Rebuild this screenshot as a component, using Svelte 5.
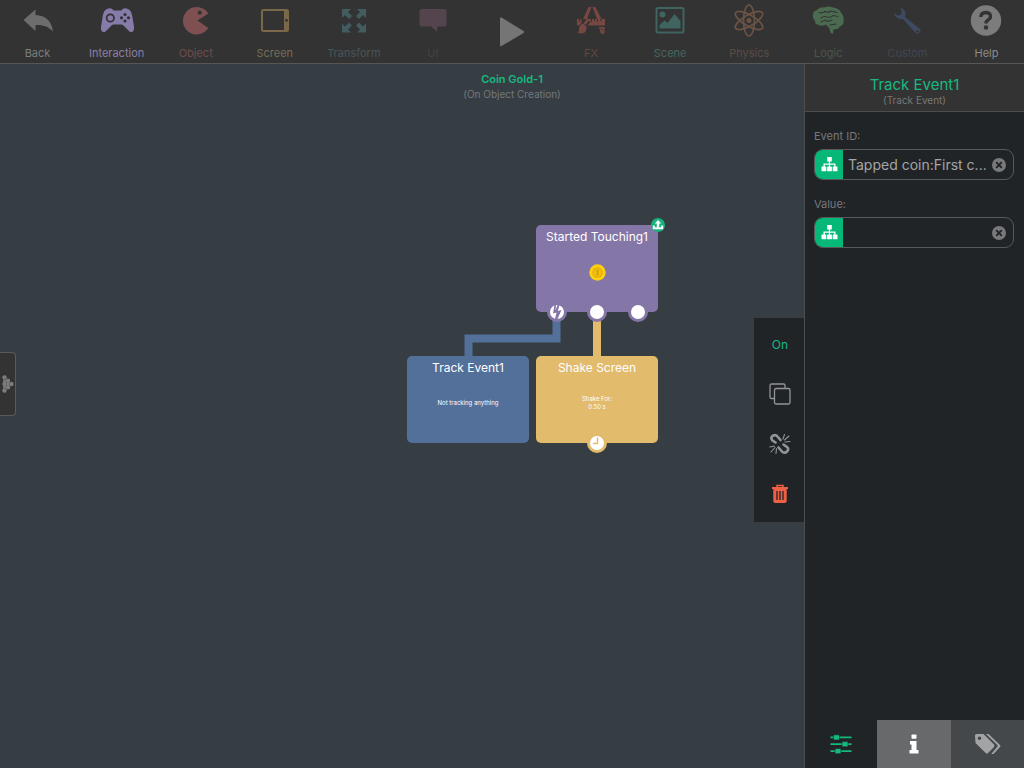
<script lang="ts">
  interface Category {
    id: string;
    label: string;
    color: string;
    text: string;
  }

  interface BehaviorNode {
    id: string;
    kind: string;
    title: string;
    detail: string[];
    x: number;
    y: number;
    ports: { x: number; icon?: string }[];
  }

  const categories: Category[] = [
    { id: 'back', label: 'Back', color: '#6d6d6d', text: '#7d7d7d' },
    { id: 'interaction', label: 'Interaction', color: '#877ba9', text: '#8981a5' },
    { id: 'object', label: 'Object', color: '#7f5052', text: '#6e4d4d' },
    { id: 'screen', label: 'Screen', color: '#7a6849', text: '#776c56' },
    { id: 'transform', label: 'Transform', color: '#425c60', text: '#48565a' },
    { id: 'ui', label: 'UI', color: '#53444d', text: '#484245' },
    { id: 'play', label: '', color: '#757575', text: '#757575' },
    { id: 'fx', label: 'FX', color: '#774841', text: '#67463f' },
    { id: 'scene', label: 'Scene', color: '#40645f', text: '#466660' },
    { id: 'physics', label: 'Physics', color: '#6b5345', text: '#5a4d46' },
    { id: 'logic', label: 'Logic', color: '#4b6b50', text: '#4a564c' },
    { id: 'custom', label: 'Custom', color: '#3d4a61', text: '#414651' },
    { id: 'help', label: 'Help', color: '#7c7c7c', text: '#8b8b8b' },
  ];

  // x is measured from the middle of the canvas, y from its top
  const nodes: BehaviorNode[] = [
    { id: 'touch', kind: 'purple', title: 'Started Touching1', detail: [], x: 24, y: 161, ports: [{ x: 21, icon: 'bolt' }, { x: 61 }, { x: 102 }] },
    { id: 'track', kind: 'blue', title: 'Track Event1', detail: ['Not tracking anything'], x: -105, y: 292, ports: [] },
    { id: 'shake', kind: 'yellow', title: 'Shake Screen', detail: ['Shake For:', '0.50 s'], x: 24, y: 292, ports: [{ x: 61, icon: 'clock' }] },
  ];

  let activeCategory = $state('interaction');
  let activeTab = $state('settings');
  let enabled = $state(true);
  let eventId = $state('Tapped coin:First c...');
  let value = $state('');
</script>

{#snippet categoryIcon(id: string)}
  <svg class="category-icon" viewBox="0 0 36 42" fill="currentColor" aria-hidden="true">
    {#if id === 'back'}
      <path d="M3.500 20 15.500 9.500V15C26 15.500 31.500 21 33 31.500 28.500 26.500 23 24.500 15.500 25V31Z" />
    {:else if id === 'interaction'}
      <path d="M8 9C11 7.500 13 8 14.500 10.500H22.500C24 8 26 7.500 29 9 31.500 10 32.500 12 33.500 17.500L35 27C35.500 31.500 33 33 30.500 31.500L24.500 25.500C23.500 24.800 23 24.500 22 24.500H15C14 24.500 13.500 24.800 12.500 25.500L6.500 31.500C4 33 1.500 31.500 2 27L3.500 17.500C4.500 12 5.500 10 8 9Z" />
      <circle cx="11.300" cy="18" r="3.700" fill="none" stroke="#333" stroke-width="1.700" />
      <g fill="#333">
        <circle cx="26" cy="14.500" r="1.600" /><circle cx="26" cy="21" r="1.600" />
        <circle cx="22.500" cy="17.800" r="1.600" /><circle cx="29.500" cy="17.800" r="1.600" />
      </g>
    {:else if id === 'object'}
      <path fill-rule="evenodd" d="M30.300 13.500 19.500 20.500 30.300 28A13.700 13.700 0 1 1 30.300 13.500ZM21.700 10.600A2.100 2.100 0 1 0 21.700 14.800 2.100 2.100 0 1 0 21.700 10.600Z" />
    {:else if id === 'screen'}
      <path fill-rule="evenodd" d="M6.500 9H29.500Q32 9 32 11.500V29.500Q32 32 29.500 32H6.500Q4 32 4 29.500V11.500Q4 9 6.500 9ZM6 11V30H27V11ZM29.500 19A1.400 1.400 0 1 0 29.500 21.800 1.400 1.400 0 1 0 29.500 19Z" />
    {:else if id === 'transform'}
      <path d="M6 9H15L12 12 16 16 13 19 9 15 6 18ZM30 9H21L24 12 20 16 23 19 27 15 30 18ZM6 32.500H15L12 29.500 16 25.500 13 22.500 9 26.500 6 23.500ZM30 32.500H21L24 29.500 20 25.500 23 22.500 27 26.500 30 23.500Z" />
    {:else if id === 'ui'}
      <path d="M7 9H29Q31.500 9 31.500 11.500V24Q31.500 26.500 29 26.500H22.500L22 31.500 16 26.500H7Q4.500 26.500 4.500 24V11.500Q4.500 9 7 9Z" />
    {:else if id === 'play'}
      <path d="M7.500 17.500Q6 17 6 18.500V45Q6 46.500 7.500 46L29.500 33Q30.500 32 29.500 31Z" />
    {:else if id === 'fx'}
      <path d="M15.500 7H18.500L14 19H10ZM19.500 7H22.500L28.500 19H24ZM4 19H8.500V23L6 25.500H4ZM15.500 19H32V25.500H14.500L17 22.500ZM26 27H31.500V33L29.500 34.500 27.500 32.500Z" />
      <path d="M14.500 18 16.500 20 12.500 25 10.500 23.500ZM10 23.500 13.500 26.500Q14 33 8.500 33.500L4.500 33Q6.500 31.500 6 28 7 24 10 23.500Z" />
      <path d="M18.500 19v3M21.500 19v2M24.500 19v3M27.500 19v2M6.500 19v2.500M28 28l2 2.500" stroke="#333" stroke-width="1" />
    {:else if id === 'scene'}
      <rect x="4.500" y="8" width="27" height="24.500" rx="1.500" fill="none" stroke="currentColor" stroke-width="2" />
      <circle cx="10.500" cy="14.500" r="3" />
      <path d="M7.500 28.500V25L12.500 20.500 15.500 23 22.500 14 28.500 21V28.500Z" />
    {:else if id === 'physics'}
      <g fill="none" stroke="currentColor" stroke-width="1.700">
        <ellipse cx="18" cy="20.500" rx="5.500" ry="15.500" />
        <ellipse cx="18" cy="20.500" rx="5.500" ry="15.500" transform="rotate(60 18 20.500)" />
        <ellipse cx="18" cy="20.500" rx="5.500" ry="15.500" transform="rotate(120 18 20.500)" />
      </g>
      <circle cx="18" cy="20.500" r="2.500" />
    {:else if id === 'logic'}
      <path d="M3 17Q2 11.500 7 10 10 6.500 14 7.500 19 5.500 23 7.500 29 8 31 12.500 34.500 17 33.500 20.500 34 25 30 26.500 28 30 23.500 29L23 34 20.500 33 19.500 28.500 16 24.500Q11 27 8 24.500 5 25 5 20.500 3 20 3 17Z" />
      <path d="M9 12.500Q12 13.500 15 11.500 18 13 21 11L27 12.500M11 18Q14 15.500 17 17 21 18 23 15.500L28 16.500M11 22 15 20 18 21.500 22 20M20 25 26 24" fill="none" stroke="#333" stroke-width="1.100" stroke-linecap="round" />
    {:else if id === 'custom'}
      <path fill-rule="evenodd" d="M11 7.500Q15.500 8.500 16.500 13L16 17 31 29Q32.500 31 30.500 32.800 28.500 34.500 26.500 33L14 19Q7 20 4.500 12.500L8.500 15.500 12 14.500 13 11ZM28.500 30A1.300 1.300 0 1 0 28.500 32.600 1.300 1.300 0 1 0 28.500 30Z" />
    {:else if id === 'help'}
      <circle cx="18" cy="20.500" r="15.200" />
      <path d="M12.800 17Q13 12.500 18 12.500 22.500 12.700 22.500 16.500 22.500 18.500 20 20 18 21.200 18 23.500" fill="none" stroke="#333" stroke-width="3.300" />
      <circle cx="18" cy="27.500" r="2.200" fill="#333" />
    {/if}
  </svg>
{/snippet}

{#snippet field(id: string, label: string, text: string, update: (v: string) => void)}
  <div class="field">
    <label for={id}>{label}</label>
    <div class="field-box">
      <button class="picker" aria-label="Choose attribute">
        <svg width="17" height="15" viewBox="0 0 17 15" fill="#fff" aria-hidden="true">
          <path d="M6.200 0h4.600v4.500h-1.700v2h5.400v3.500h-1.300v-2.200H9.100V10H7.900V7.800H3.800V10H2.500V6.500h5.400v-2H6.200Z" />
          <rect x="0.500" y="9.500" width="4.800" height="4.700" rx="0.500" />
          <rect x="6.100" y="9.500" width="4.800" height="4.700" rx="0.500" />
          <rect x="11.700" y="9.500" width="4.800" height="4.700" rx="0.500" />
        </svg>
      </button>
      <input {id} type="text" value={text} oninput={(e) => update(e.currentTarget.value)} />
      <button class="clear" aria-label="Clear" onclick={() => update('')}>
        <svg width="14" height="14" viewBox="0 0 14 14" aria-hidden="true">
          <circle cx="7" cy="7" r="7" fill="#77797b" />
          <path d="m4.200 4.200 5.600 5.600m0-5.600-5.600 5.600" stroke="#212426" stroke-width="1.900" />
        </svg>
      </button>
    </div>
  </div>
{/snippet}

<div class="app">
  <header class="toolbar">
    <nav>
      {#each categories as category (category.id)}
        <button
          class="category"
          style:color={category.color}
          aria-label={category.label || 'Play'}
          aria-pressed={activeCategory === category.id}
          onclick={() => { activeCategory = category.id; }}
        >
          {@render categoryIcon(category.id)}
          <span style:color={category.text}>{category.label}</span>
        </button>
      {/each}
    </nav>
  </header>

  <main>
    <section class="canvas">
      <h1>Coin Gold-1</h1>
      <p class="context">(On Object Creation)</p>

      <svg class="wires" width="260" height="50" viewBox="0 0 260 50" fill="none" stroke-width="8" aria-hidden="true">
        <path d="M149.500 0V26.500H61.500V50" stroke="#53709a" />
        <path d="M190 0V50" stroke="#e2bb6d" />
      </svg>

      {#each nodes as node (node.id)}
        <article class="node {node.kind}" style:--x="{node.x}px" style:--y="{node.y}px">
          <h2>{node.title}</h2>
          <div class="node-body">
            {#if node.id === 'touch'}
              <svg width="17" height="17" viewBox="0 0 17 17" aria-hidden="true">
                <circle cx="8.500" cy="8.500" r="8.200" fill="#fdd00f" />
                <circle cx="8.500" cy="8.500" r="5.200" fill="#e2ad0a" />
                <circle cx="8.500" cy="8.500" r="4.200" fill="#f3bd0c" />
                <rect x="7.500" y="5.500" width="2" height="6" rx="0.500" fill="#d8a108" />
              </svg>
            {/if}
            {#each node.detail as line}
              <p>{line}</p>
            {/each}
          </div>
          {#each node.ports as port}
            <button class="port" style:left="{port.x}px" aria-label="Connect output">
              {#if port.icon === 'bolt'}
                <svg width="14" height="14" viewBox="0 0 14 14" aria-hidden="true">
                  <path d="M4.500 0 3 8.500 6.500 7.500 5 14H7.500L11.500 5 7.800 6 9.500 0 7.500 0 5.500 5.500 6 0Z" fill="#8576a8" />
                </svg>
              {:else if port.icon === 'clock'}
                <svg width="14" height="14" viewBox="0 0 14 14" aria-hidden="true">
                  <path d="M7.500 1.500V7.500H3" fill="none" stroke="#e2bb6d" stroke-width="1.500" />
                </svg>
              {/if}
            </button>
          {/each}
          {#if node.id === 'touch'}
            <span class="badge">
              <svg width="14" height="14" viewBox="0 0 14 14" aria-hidden="true">
                <path d="M7 2 10.300 5.500H8.200V9H5.800V5.500H3.700Z" fill="#fff" />
                <path d="M2.800 7.500V10.300H11.200V7.500" fill="none" stroke="#fff" stroke-width="2" />
              </svg>
            </span>
          {/if}
        </article>
      {/each}
    </section>

    <button class="drawer" aria-label="Open drawer">
      <svg width="12" height="18" viewBox="0 0 12 18" fill="#7c7c7c" aria-hidden="true">
        <circle cx="2.500" cy="2.500" r="2.200" /><circle cx="6" cy="5.700" r="2.200" /><circle cx="9.500" cy="9" r="2.200" />
        <circle cx="6" cy="12.300" r="2.200" /><circle cx="2.500" cy="15.500" r="2.200" /><circle cx="2.500" cy="9" r="2.200" />
        <circle cx="6" cy="9" r="1.700" /><circle cx="2.500" cy="6" r="1.500" /><circle cx="2.500" cy="12" r="1.500" />
      </svg>
    </button>

    <div class="actions">
      <button class="toggle" onclick={() => { enabled = !enabled; }}>{enabled ? 'On' : 'Off'}</button>
      <button aria-label="Copy">
        <svg width="22" height="22" viewBox="0 0 22 22" fill="none" stroke="#929496" stroke-width="1.300" aria-hidden="true">
          <path d="M5 15.500H2.500Q1 15.500 1 14V2.500Q1 1 2.500 1H14.500Q16 1 16 2.500V5" />
          <rect x="5.500" y="5.500" width="15.500" height="15.500" rx="1.500" />
        </svg>
      </button>
      <button aria-label="Disconnect">
        <svg width="22" height="22" viewBox="0 0 22 22" fill="none" stroke="#929496" stroke-linecap="round" aria-hidden="true">
          <path d="M6.500 9.500 3.500 7.500Q1.500 5.500 3 3.500 5 1.500 7.500 2.500L11.500 7" stroke-width="2.600" />
          <path d="M9.500 14.500 13.500 19Q16 20.500 18 18.500 20 16.500 18.500 14.500L14.500 11.500" stroke-width="2.600" />
          <path d="M14 6 15.500 1.500M15.500 7 20 3M16 9 21 8.500M7.500 15.500 7 20.500M6 14.500 2 19M5.500 13 0.800 14" stroke-width="1.100" />
        </svg>
      </button>
      <button aria-label="Delete">
        <svg width="18" height="20" viewBox="0 0 18 20" aria-hidden="true">
          <path d="M6 3V1.500H12V3" fill="none" stroke="#ed6045" stroke-width="1.500" />
          <path d="M1 3H17V5H15.700V17Q15.700 19 13.700 19H4.300Q2.300 19 2.300 17V5H1Z" fill="#ed6045" />
          <path d="M6 7V16M9 7V16M12 7V16" stroke="#212426" stroke-width="1.300" />
        </svg>
      </button>
    </div>

    <aside class="inspector">
      <div class="inspector-head">
        <h2>Track Event1</h2>
        <p>(Track Event)</p>
      </div>
      <div class="fields">
        {@render field('event-id', 'Event ID:', eventId, (v) => { eventId = v; })}
        {@render field('value', 'Value:', value, (v) => { value = v; })}
      </div>
      <div class="tabs">
        <button class="tab settings" aria-label="Settings" aria-pressed={activeTab === 'settings'} onclick={() => { activeTab = 'settings'; }}>
          <svg width="22" height="20" viewBox="0 0 22 20" fill="#14b97b" aria-hidden="true">
            <path d="M0.500 2.500h21v1.800h-21ZM0.500 9.300h21v1.800h-21ZM0.500 16.200h21V18h-21Z" />
            <rect x="3.500" y="0.800" width="6" height="5.200" rx="1" stroke="#212426" stroke-width="0.600" />
            <rect x="12" y="7.600" width="6" height="5.200" rx="1" stroke="#212426" stroke-width="0.600" />
            <rect x="5" y="14.500" width="6" height="5.200" rx="1" stroke="#212426" stroke-width="0.600" />
          </svg>
        </button>
        <button class="tab info" aria-label="Info" aria-pressed={activeTab === 'info'} onclick={() => { activeTab = 'info'; }}>
          <svg width="10" height="20" viewBox="0 0 10 20" fill="#fff" aria-hidden="true">
            <rect x="2.500" y="0.500" width="5" height="4.300" rx="0.800" />
            <path d="M1 7H7.500V16H9.500V19.500H0.500V16H2.500V10.500H1Z" />
          </svg>
        </button>
        <button class="tab tags" aria-label="Tags" aria-pressed={activeTab === 'tags'} onclick={() => { activeTab = 'tags'; }}>
          <svg width="26" height="22" viewBox="0 0 26 22" fill="#a3a4a5" aria-hidden="true">
            <path fill-rule="evenodd" d="M0 2.500Q0 1 1.500 1H8.500L19 11.500Q20 12.700 19 14L13 20Q12 21 10.700 20L0.500 10ZM4.500 3.500A1.800 1.800 0 1 0 4.500 7.100 1.800 1.800 0 1 0 4.500 3.500Z" />
            <path d="M11 1H13.500L25 12Q26 13 25 14L19 20.500Q17.500 21.500 16.500 20.500L22.500 13.500Q23 12.700 22.300 12Z" />
          </svg>
        </button>
      </div>
    </aside>
  </main>
</div>

<style>
  :global(body) {
    background: #363e43;
  }

  .app {
    min-height: 100vh;
    display: flex;
    flex-direction: column;
    background: #363e43;
    font-family: Inter, "Liberation Sans", sans-serif;
    color: #fff;
  }

  h1,
  h2,
  p {
    margin: 0;
    font-weight: 400;
  }

  button {
    display: flex;
    align-items: center;
    justify-content: center;
    padding: 0;
    border: 0;
    background: none;
    color: inherit;
    font: inherit;
    cursor: pointer;
  }

  svg {
    display: block;
    flex: none;
  }

  .toolbar {
    overflow: hidden;
    background: #333;
    border-bottom: 1px solid #565656;
  }

  nav {
    display: grid;
    grid-template-columns: repeat(13, 1fr);
    height: 63px;
    margin: 0 -2px;
  }

  .category {
    flex-direction: column;
    justify-content: flex-start;
    font-size: 11px;
    line-height: 22px;
  }

  .category span {
    height: 22px;
  }

  .category-icon {
    width: 36px;
    height: 42px;
    overflow: visible;
  }

  main {
    flex: 1;
    display: grid;
    grid-template: 1fr / 1fr;
  }

  /* the canvas runs under the drawer, the actions and the inspector */
  .canvas,
  .drawer,
  .actions,
  .inspector {
    grid-area: 1 / 1;
  }

  .canvas {
    position: relative;
    overflow: hidden;
    padding-top: 8px;
    text-align: center;
  }

  .canvas h1 {
    font-size: 11px;
    line-height: 15px;
    font-weight: 600;
    color: #18b982;
  }

  .context {
    font-size: 10px;
    line-height: 15px;
    color: #74787b;
  }

  .wires {
    position: absolute;
    top: 248px;
    left: calc(50% - 105px);
  }

  .node {
    position: absolute;
    top: var(--y);
    left: calc(50% + var(--x));
    width: 122px;
    height: 87px;
    display: flex;
    flex-direction: column;
    border-radius: 5px;
    background: var(--node-color);
  }

  .purple { --node-color: #8576a8; }
  .blue { --node-color: #53709a; }
  .yellow { --node-color: #e2bb6d; }

  .node h2 {
    font-size: 12px;
    line-height: 23px;
    white-space: nowrap;
  }

  .node-body {
    flex: 1;
    display: flex;
    flex-direction: column;
    align-items: center;
    justify-content: center;
    padding-bottom: 16px;
    font-size: 6px;
    line-height: 8px;
  }

  .port {
    position: absolute;
    bottom: -10px;
    width: 20px;
    height: 20px;
    box-sizing: border-box;
    margin-left: -10px;
    border: 3px solid var(--node-color);
    border-radius: 50%;
    background: #fff;
  }

  .badge {
    position: absolute;
    top: -7px;
    right: -7px;
    border-radius: 50%;
    background: #18b27c;
  }

  .drawer {
    place-self: center start;
    width: 16px;
    height: 64px;
    margin-bottom: 64px;
    box-sizing: border-box;
    border: 1px solid #5b5b5b;
    border-left: 0;
    border-radius: 0 4px 4px 0;
    background: #333;
    z-index: 1;
  }

  .actions {
    place-self: center end;
    z-index: 1;
    display: grid;
    grid-auto-rows: 50px;
    box-sizing: border-box;
    width: 50px;
    margin: 8px 220px 0 0;
    padding: 1px 0 3px 2px;
    background: #212427;
  }

  .toggle {
    font-size: 12px;
    color: #18b982;
  }

  .inspector {
    z-index: 1;
    justify-self: end;
    box-sizing: border-box;
    width: 220px;
    display: flex;
    flex-direction: column;
    border-left: 1px solid #4c4f51;
    background: #212427;
  }

  .inspector-head {
    padding: 11px 0 5px;
    border-bottom: 1px solid #4c4c4c;
    background: #333;
    text-align: center;
  }

  .inspector-head h2 {
    font-size: 15px;
    line-height: 19px;
    color: #18b982;
  }

  .inspector-head p {
    font-size: 10px;
    line-height: 12px;
    color: #777;
  }

  .fields {
    flex: 1;
    display: flex;
    flex-direction: column;
    gap: 15px;
    padding: 15px 10px 0 9px;
  }

  .field {
    display: flex;
    flex-direction: column;
    gap: 4px;
  }

  label {
    font-size: 11px;
    line-height: 18px;
    color: #78797b;
  }

  .field-box {
    display: flex;
    height: 31px;
    box-sizing: border-box;
    overflow: hidden;
    border: 1px solid #57595b;
    border-radius: 9px;
  }

  .picker {
    width: 28px;
    background: #05b878;
  }

  .field-box input {
    flex: 1;
    min-width: 0;
    padding: 0 0 0 5px;
    border: 0;
    outline: none;
    background: none;
    color: #a3a5a6;
    font: inherit;
    font-size: 14px;
    text-overflow: ellipsis;
  }

  .clear {
    width: 20px;
    margin-right: 4px;
  }

  .tabs {
    display: grid;
    grid-template-columns: 72fr 74fr 73fr;
    height: 48px;
  }

  .info {
    background: #68696b;
  }

  .tags {
    background: #44484b;
  }
</style>
